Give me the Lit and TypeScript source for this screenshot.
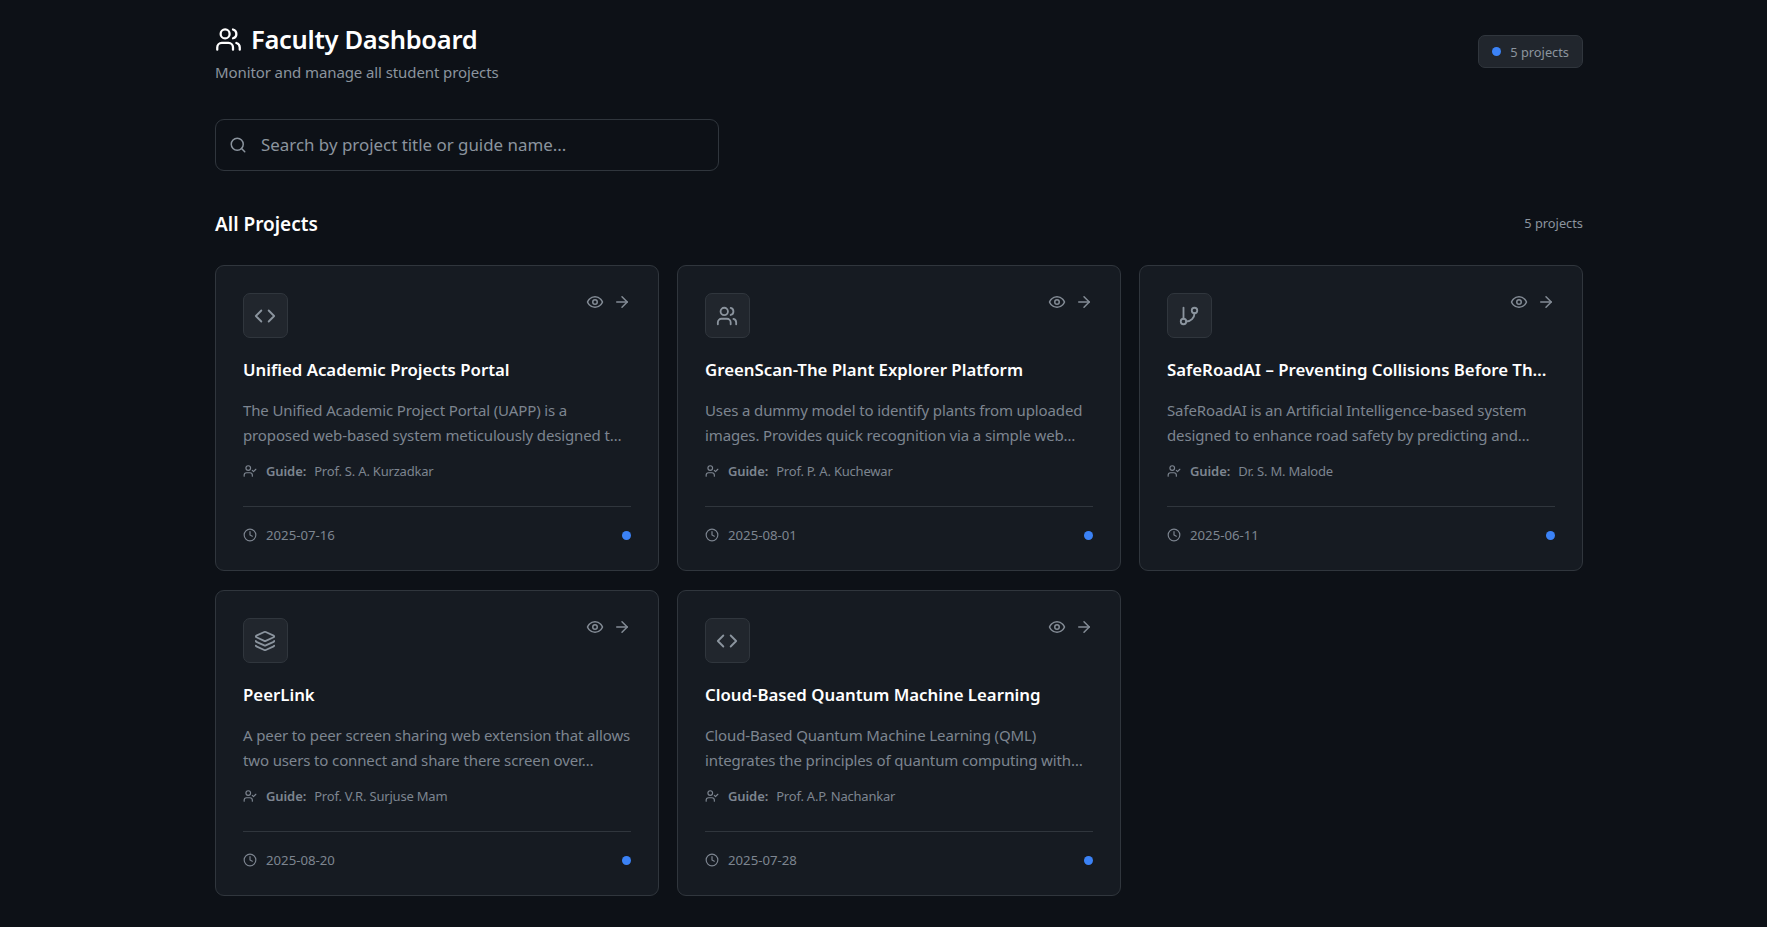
import { LitElement, html, css, svg } from 'lit';
import { customElement } from 'lit/decorators.js';

const icons = {
  users: svg`<path d="M16 21v-2a4 4 0 0 0-4-4H6a4 4 0 0 0-4 4v2"/><circle cx="9" cy="7" r="4"/><path d="M22 21v-2a4 4 0 0 0-3-3.87"/><path d="M16 3.13a4 4 0 0 1 0 7.75"/>`,
  code: svg`<polyline points="16 18 22 12 16 6"/><polyline points="8 6 2 12 8 18"/>`,
  branch: svg`<line x1="6" x2="6" y1="3" y2="15"/><circle cx="18" cy="6" r="3"/><circle cx="6" cy="18" r="3"/><path d="M18 9a9 9 0 0 1-9 9"/>`,
  layers: svg`<path d="M12.83 2.18a2 2 0 0 0-1.66 0L2.6 6.08a1 1 0 0 0 0 1.83l8.58 3.91a2 2 0 0 0 1.66 0l8.58-3.9a1 1 0 0 0 0-1.83z"/><path d="M2 12a1 1 0 0 0 .58.91l8.6 3.91a2 2 0 0 0 1.65 0l8.58-3.9A1 1 0 0 0 22 12"/><path d="M2 17a1 1 0 0 0 .58.91l8.6 3.91a2 2 0 0 0 1.65 0l8.58-3.9A1 1 0 0 0 22 17"/>`,
  eye: svg`<path d="M2 12s3-7 10-7 10 7 10 7-3 7-10 7-10-7-10-7Z"/><circle cx="12" cy="12" r="3"/>`,
  arrow: svg`<path d="M5 12h14"/><path d="m12 5 7 7-7 7"/>`,
  search: svg`<circle cx="11" cy="11" r="8"/><path d="m21 21-4.3-4.3"/>`,
  userCheck: svg`<path d="M16 21v-2a4 4 0 0 0-4-4H6a4 4 0 0 0-4 4v2"/><circle cx="9" cy="7" r="4"/><polyline points="16 11 18 13 22 9"/>`,
  clock: svg`<circle cx="12" cy="12" r="10"/><polyline points="12 6 12 12 16 14"/>`,
};

type IconName = keyof typeof icons;

const icon = (name: IconName) => html`
  <svg viewBox="0 0 24 24" fill="none" stroke="currentColor" stroke-width="2" stroke-linecap="round" stroke-linejoin="round">${icons[name]}</svg>
`;

const projects: { icon: IconName; title: string; desc: string; guide: string; date: string }[] = [
  {
    icon: 'code',
    title: 'Unified Academic Projects Portal',
    desc: 'The Unified Academic Project Portal (UAPP) is a proposed web-based system meticulously designed t…',
    guide: 'Prof. S. A. Kurzadkar',
    date: '2025-07-16',
  },
  {
    icon: 'users',
    title: 'GreenScan-The Plant Explorer Platform',
    desc: 'Uses a dummy model to identify plants from uploaded images. Provides quick recognition via a simple web…',
    guide: 'Prof. P. A. Kuchewar',
    date: '2025-08-01',
  },
  {
    icon: 'branch',
    title: 'SafeRoadAI – Preventing Collisions Before Th…',
    desc: 'SafeRoadAI is an Artificial Intelligence-based system designed to enhance road safety by predicting and…',
    guide: 'Dr. S. M. Malode',
    date: '2025-06-11',
  },
  {
    icon: 'layers',
    title: 'PeerLink',
    desc: 'A peer to peer screen sharing web extension that allows two users to connect and share there screen over…',
    guide: 'Prof. V.R. Surjuse Mam',
    date: '2025-08-20',
  },
  {
    icon: 'code',
    title: 'Cloud-Based Quantum Machine Learning',
    desc: 'Cloud-Based Quantum Machine Learning (QML) integrates the principles of quantum computing with…',
    guide: 'Prof. A.P. Nachankar',
    date: '2025-07-28',
  },
];

@customElement('app-root')
export class AppRoot extends LitElement {
  static styles = css`
    :host {
      display: block;
      min-height: 100vh;
      background: #0d1117;
      color: #fff;
      font-family: 'Noto Sans', 'Open Sans', sans-serif;
    }

    .page {
      width: 1368px;
      margin-left: 215px;
      padding-top: 21px;
      padding-bottom: 32px;
    }

    .header {
      display: flex;
      justify-content: space-between;
      align-items: flex-start;
    }

    .heading {
      display: flex;
      align-items: center;
      gap: 9px;
      height: 36px;
    }

    .heading svg {
      width: 27px;
      height: 27px;
    }

    h1 {
      margin: 0;
      font-size: 25.5px;
      line-height: 36px;
      font-weight: 600;
      letter-spacing: -0.3px;
    }

    .subtitle {
      margin: 3px 0 0;
      font-size: 15px;
      line-height: 24px;
      letter-spacing: -0.1px;
      color: #8b949e;
    }

    .badge {
      display: flex;
      align-items: center;
      gap: 9px;
      height: 33px;
      box-sizing: border-box;
      margin-top: 14px;
      padding: 0 13px;
      background: #21262d;
      border: 1px solid #30363d;
      border-radius: 7px;
      font-size: 12.8px;
      color: #8b949e;
    }

    .dot {
      width: 9px;
      height: 9px;
      border-radius: 50%;
      background: #3b82f6;
      flex: none;
    }

    .search {
      display: flex;
      align-items: center;
      gap: 14px;
      width: 504px;
      height: 52px;
      box-sizing: border-box;
      margin-top: 35px;
      padding: 0 13px;
      border: 1px solid #30363d;
      border-radius: 9px;
      font-size: 16.9px;
      color: #8b949e;
    }

    .search svg {
      width: 18px;
      height: 18px;
      flex: none;
    }

    .search span {
      padding-bottom: 2px;
    }

    .section {
      display: flex;
      justify-content: space-between;
      align-items: center;
      margin-top: 37px;
      height: 32px;
    }

    h2 {
      margin: 0;
      font-size: 19px;
      font-weight: 600;
    }

    .count {
      font-size: 12.8px;
      padding-bottom: 2px;
      color: #8b949e;
    }

    .grid {
      display: grid;
      grid-template-columns: repeat(3, 1fr);
      gap: 19px 18px;
      margin-top: 25px;
    }

    .card {
      box-sizing: border-box;
      height: 306px;
      min-width: 0;
      padding: 27px;
      background: #161b22;
      border: 1px solid #30363d;
      border-radius: 9px;
    }

    .card-top {
      display: flex;
      justify-content: space-between;
      align-items: flex-start;
    }

    .card-icon {
      display: flex;
      align-items: center;
      justify-content: center;
      width: 45px;
      height: 45px;
      box-sizing: border-box;
      background: #21262d;
      border: 1px solid #30363d;
      border-radius: 7px;
      color: #8b949e;
    }

    .card-icon svg {
      width: 22px;
      height: 22px;
      margin-left: -1px;
    }

    .actions {
      display: flex;
      gap: 9px;
      color: #848c96;
    }

    .actions svg {
      width: 18px;
      height: 18px;
    }

    h3 {
      margin: 18px 0 0;
      font-size: 16.8px;
      line-height: 27px;
      font-weight: 600;
      white-space: nowrap;
    }

    .desc {
      margin: 15px 0 0;
      font-size: 15px;
      line-height: 25px;
      height: 50px;
      letter-spacing: -0.13px;
      color: #7d8590;
    }

    .guide {
      display: flex;
      align-items: center;
      margin-top: 11px;
      height: 24px;
      font-size: 13px;
      color: #7d8590;
    }

    .guide svg,
    .footer svg {
      width: 14px;
      height: 14px;
      flex: none;
      margin-right: 9px;
    }

    .guide b {
      font-weight: 600;
      margin-right: 8px;
      letter-spacing: -0.1px;
    }

    .guide span {
      letter-spacing: -0.2px;
    }

    .footer {
      display: flex;
      align-items: center;
      justify-content: space-between;
      margin-top: 23px;
      padding-top: 19px;
      border-top: 1px solid #30363d;
      font-size: 13.2px;
      color: #7d8590;
    }

    .date {
      display: flex;
      align-items: center;
    }
  `;

  private renderCard(p: (typeof projects)[number]) {
    return html`
      <article class="card">
        <div class="card-top">
          <div class="card-icon">${icon(p.icon)}</div>
          <div class="actions">${icon('eye')}${icon('arrow')}</div>
        </div>
        <h3>${p.title}</h3>
        <p class="desc">${p.desc}</p>
        <div class="guide">${icon('userCheck')}<b>Guide:</b><span>${p.guide}</span></div>
        <div class="footer">
          <span class="date">${icon('clock')}${p.date}</span>
          <span class="dot"></span>
        </div>
      </article>
    `;
  }

  render() {
    return html`
      <div class="page">
        <header class="header">
          <div>
            <div class="heading">${icon('users')}<h1>Faculty Dashboard</h1></div>
            <p class="subtitle">Monitor and manage all student projects</p>
          </div>
          <div class="badge"><span class="dot"></span>5 projects</div>
        </header>
        <div class="search">${icon('search')}<span>Search by project title or guide name...</span></div>
        <div class="section"><h2>All Projects</h2><span class="count">5 projects</span></div>
        <div class="grid">${projects.map((p) => this.renderCard(p))}</div>
      </div>
    `;
  }
}
